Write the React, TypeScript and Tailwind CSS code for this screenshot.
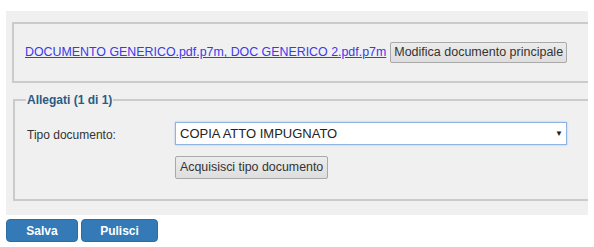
import React from 'react';

export default function App() {
  return (
    <div className="w-[594px] h-[247px] bg-white pt-[11px] pl-[6px] font-['Liberation_Sans',Arial,sans-serif] text-[12px] text-[#333]">
      {/* Main panel */}
      <div className="w-[582px] h-[204px] bg-[#f0f0f0] overflow-hidden pt-[11px] pl-[6px]">
        {/* Documento principale */}
        <div className="w-[600px] h-[61px] border-2 border-r-0 border-[#cbcbcb] flex items-center pl-[11px]">
          <a href="#" className="text-[12.4px] text-[#3a3ae8] underline leading-none">
            DOCUMENTO GENERICO.pdf.p7m, DOC GENERICO 2.pdf.p7m
          </a>
          <button className="ml-[4px] h-[21px] px-[3px] text-[12.5px] bg-gradient-to-b from-[#ececec] to-[#dedede] border border-[#a9a9a9] rounded-[2px] text-[#333] leading-none">
            Modifica documento principale
          </button>
        </div>

        {/* Allegati */}
        <fieldset className="mt-[11px] ml-[1px] w-[600px] h-[107px] border-2 border-r-0 border-[#cbcbcb] pl-[12px] pr-0 pt-[16px]">
          <legend className="px-[1px] -ml-[1px] font-bold text-[#2c5a84] leading-none">Allegati (1 di 1)</legend>
          <div className="flex">
            <div className="w-[148px] pt-[4px]">Tipo documento:</div>
            <div className="flex flex-col items-start gap-[11px]">
              <div className="w-[392px] h-[23px] bg-white border border-[#8fb4e3] shadow-[0_0_2px_#a9c8ef] flex items-center justify-between pl-[4px] pr-[6px] text-[13px] text-[#222]">
                <span>COPIA ATTO IMPUGNATO</span>
                <span className="text-[8px] text-[#222] translate-x-[3px]">▼</span>
              </div>
              <button className="h-[23px] px-[4px] text-[12.4px] bg-gradient-to-b from-[#ececec] to-[#dedede] border border-[#a9a9a9] rounded-[2px] text-[#333] leading-none">
                Acquisisci tipo documento
              </button>
            </div>
          </div>
        </fieldset>
      </div>

      {/* Actions */}
      <div className="flex gap-[3px] mt-[4px]">
        <button className="w-[72px] h-[23px] bg-[#337ab7] border border-[#2e6da4] rounded-[4px] text-white font-bold leading-none">
          Salva
        </button>
        <button className="w-[77px] h-[23px] bg-[#337ab7] border border-[#2e6da4] rounded-[4px] text-white font-bold leading-none">
          Pulisci
        </button>
      </div>
    </div>
  );
}
